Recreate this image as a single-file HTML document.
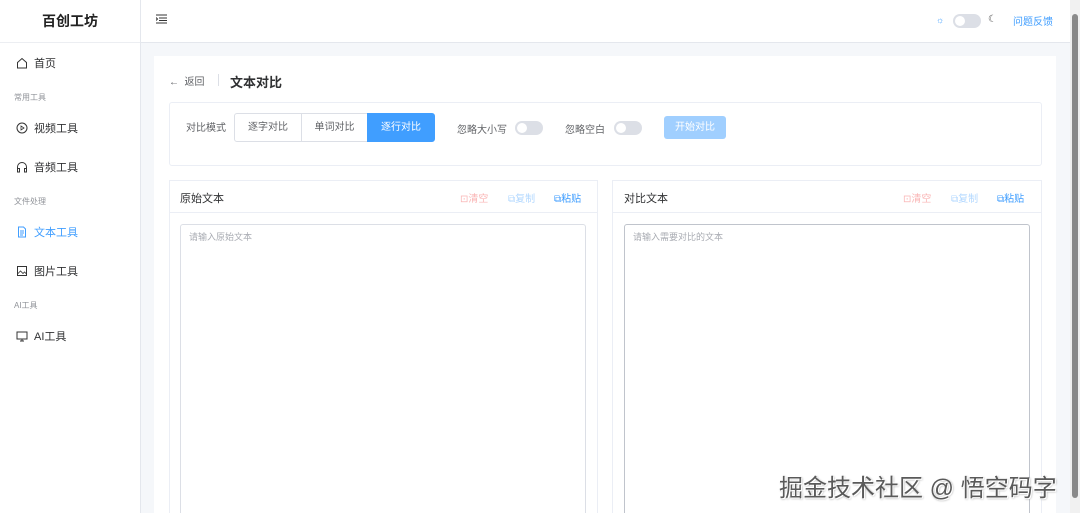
<!DOCTYPE html>
<html><head><meta charset="utf-8"><style>
*{box-sizing:border-box;margin:0;padding:0}
html{width:1080px;height:513px;overflow:hidden}
body{width:1080px;height:513px;overflow:hidden;font-family:"Liberation Sans","Noto Sans CJK SC",sans-serif;background:#f5f7fa;position:relative;color:#303133}
.abs{position:absolute}
.side{left:0;top:0;width:141px;height:513px;background:#fff;border-right:1px solid #e4e7ed}
.logo{left:0;top:0;width:140px;height:43px;border-bottom:1px solid #eceef2;text-align:center;line-height:43px;font-size:14px;font-weight:bold;color:#222}
.nav{left:16px;font-size:11px;color:#303133;display:flex;align-items:center;gap:6px}
.grp{left:14px;font-size:8px;color:#909399}
.hdr{left:141px;top:0;width:929px;height:43px;background:#fff;border-bottom:1px solid #e4e7ed}
.card{left:154px;top:56px;width:902px;height:457px;background:#fff}
.opt{left:169px;top:102px;width:873px;height:64px;border:1px solid #ebeef5;border-radius:3px;background:#fff}
.seg{top:113px;height:29px;border:1px solid #dcdfe6;font-size:10px;line-height:27px;text-align:center;color:#606266;background:#fff}
.sw{width:28px;height:14px;border-radius:7px;background:#dcdfe6}
.sw::after{content:"";position:absolute;left:2px;top:2px;width:10px;height:10px;border-radius:50%;background:#fff}
.panel{top:180px;height:340px;border:1px solid #ebeef5;background:#fff}
.ph{font-size:11px;color:#303133}
.ta{border:1px solid #dcdfe6;border-radius:3px;font-size:9px;color:#a8abb2;padding:5px 8px}
.act{font-size:10px}
</style></head><body>
<div class="abs side"></div>
<div class="abs logo">百创工坊</div>
<div class="abs nav" style="top:55px"><svg width="12" height="12" viewBox="0 0 12 12"><path d="M1.5 5.5L6 1.5L10.5 5.5V11H1.5Z" fill="none" stroke="#333" stroke-width="1"/></svg>首页</div>
<div class="abs grp" style="top:92px">常用工具</div>
<div class="abs nav" style="top:120px"><svg width="12" height="12" viewBox="0 0 12 12"><circle cx="6" cy="6" r="5" fill="none" stroke="#333"/><path d="M5 4V8L8 6Z" fill="none" stroke="#333" stroke-width=".8"/></svg>视频工具</div>
<div class="abs nav" style="top:159px"><svg width="12" height="12" viewBox="0 0 12 12"><path d="M1.5 9V6A4.5 4.5 0 0 1 10.5 6V9M1.5 7.5H3.5V11H1.5ZM8.5 7.5H10.5V11H8.5Z" fill="none" stroke="#333"/></svg>音频工具</div>
<div class="abs grp" style="top:196px">文件处理</div>
<div class="abs nav" style="top:224px;color:#409eff"><svg width="12" height="12" viewBox="0 0 12 12"><path d="M2.5 1H7.5L9.5 3V11H2.5ZM4 5H8M4 7H8M4 9H7" fill="none" stroke="#409eff"/></svg>文本工具</div>
<div class="abs nav" style="top:263px"><svg width="12" height="12" viewBox="0 0 12 12"><rect x="1.5" y="1.5" width="9" height="9" fill="none" stroke="#333"/><path d="M1.5 9L4.5 6L7 8.5L8.5 7L10.5 9" fill="none" stroke="#333" stroke-width=".8"/></svg>图片工具</div>
<div class="abs grp" style="top:300px">AI工具</div>
<div class="abs nav" style="top:328px"><svg width="12" height="12" viewBox="0 0 12 12"><rect x="1" y="2" width="10" height="7" fill="none" stroke="#333"/><path d="M4 11H8M6 9V11" stroke="#333"/></svg>AI工具</div>

<div class="abs hdr"></div>
<svg class="abs" style="left:156px;top:14px" width="11" height="10" viewBox="0 0 11 10"><path d="M0 1H11M3 4H11M3 6.5H11M0 9H11M0 3.5L1.5 5L0 6.5" fill="none" stroke="#333" stroke-width="1"/></svg>
<div class="abs" style="left:936px;top:15px;font-size:9px;color:#409eff">☼</div>
<div class="abs sw" style="left:953px;top:14px;background:#dcdfe6"></div>
<div class="abs" style="left:988px;top:14px;font-size:10px;color:#555">☾</div>
<div class="abs" style="left:1013px;top:13px;font-size:10px;color:#409eff">问题反馈</div>
<div class="abs" style="left:1070px;top:0;width:10px;height:513px;background:#f1f1f1"></div>
<div class="abs" style="left:1072px;top:14px;width:6px;height:484px;background:#8a8a8a;border-radius:3px"></div>

<div class="abs card"></div>
<div class="abs" style="left:169px;top:73px;font-size:10px;color:#606266">←&nbsp; 返回</div>
<div class="abs" style="left:218px;top:74px;width:1px;height:12px;background:#dcdfe6"></div>
<div class="abs" style="left:230px;top:72px;font-size:13px;font-weight:bold;color:#303133">文本对比</div>
<div class="abs opt"></div>
<div class="abs" style="left:186px;top:119px;font-size:10px;color:#606266">对比模式</div>
<div class="abs seg" style="left:234px;width:68px;border-radius:3px 0 0 3px">逐字对比</div>
<div class="abs seg" style="left:301px;width:67px;border-left:1px solid #dcdfe6">单词对比</div>
<div class="abs seg" style="left:367px;width:68px;background:#409eff;border-color:#409eff;color:#fff;border-radius:0 3px 3px 0">逐行对比</div>
<div class="abs" style="left:457px;top:121px;font-size:10px;color:#606266">忽略大小写</div>
<div class="abs sw" style="left:515px;top:121px"></div>
<div class="abs" style="left:565px;top:121px;font-size:10px;color:#606266">忽略空白</div>
<div class="abs sw" style="left:614px;top:121px"></div>
<div class="abs" style="left:664px;top:116px;width:62px;height:23px;background:#a0cfff;border-radius:3px;color:#fff;font-size:10px;text-align:center;line-height:23px">开始对比</div>

<div class="abs panel" style="left:169px;width:429px"></div>
<div class="abs" style="left:169px;top:212px;width:429px;height:1px;background:#ebeef5"></div>
<div class="abs ph" style="left:180px;top:190px">原始文本</div>
<div class="abs act" style="left:460px;top:190px;color:#fab6b6">⊡清空</div>
<div class="abs act" style="left:508px;top:190px;color:#b3d8ff">⧉复制</div>
<div class="abs act" style="left:554px;top:190px;color:#409eff">⧉粘贴</div>
<div class="abs ta" style="left:180px;top:224px;width:406px;height:300px">请输入原始文本</div>

<div class="abs panel" style="left:612px;width:430px"></div>
<div class="abs" style="left:612px;top:212px;width:430px;height:1px;background:#ebeef5"></div>
<div class="abs ph" style="left:624px;top:190px">对比文本</div>
<div class="abs act" style="left:903px;top:190px;color:#fab6b6">⊡清空</div>
<div class="abs act" style="left:951px;top:190px;color:#b3d8ff">⧉复制</div>
<div class="abs act" style="left:997px;top:190px;color:#409eff">⧉粘贴</div>
<div class="abs ta" style="left:624px;top:224px;width:406px;height:300px;border-color:#c0c4cc">请输入需要对比的文本</div>

<div class="abs" style="left:779px;top:468px;font-size:24px;color:#5a5a5a;text-shadow:1px 1px 0 #fff,-1px -1px 0 #fff,1px 1px 2px #999;white-space:nowrap">掘金技术社区 @ 悟空码字</div>
</body></html>
